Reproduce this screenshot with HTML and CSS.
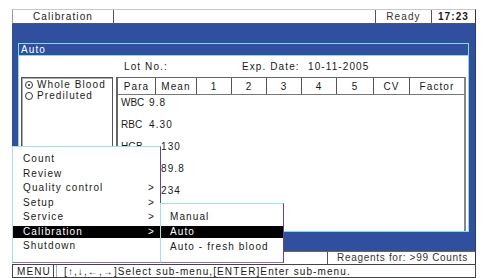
FILE: index.html
```html
<!DOCTYPE html>
<html lang="en">
<head>
    <meta charset="UTF-8">
    <title>Calibration</title>
    <link rel="stylesheet" href="styles.css">
</head>
<body>
    <div class="screen">
        <div class="topbar">
            <div class="cell cell-title">Calibration</div>
            <div class="cell cell-fill"></div>
            <div class="cell cell-ready">Ready</div>
            <div class="cell cell-clock">17:23</div>
        </div>

        <div class="desk">
            <div class="dialog">
                <div class="dialog-title">Auto</div>
                <div class="dialog-body">
                    <div class="lot-row">
                        <span class="lot">Lot No.:</span>
                        <span class="exp">Exp. Date:</span>
                        <span class="date">10-11-2005</span>
                    </div>
                    <div class="panels">
                        <div class="mode-box">
                            <div class="radio on"><span class="dot"></span>Whole Blood</div>
                            <div class="radio"><span class="dot"></span>Prediluted</div>
                        </div>
                        <div class="cal-table">
                            <div class="head">
                                <div class="c c-para">Para</div>
                                <div class="c c-mean">Mean</div>
                                <div class="c c-n">1</div>
                                <div class="c c-n">2</div>
                                <div class="c c-n">3</div>
                                <div class="c c-n">4</div>
                                <div class="c c-5">5</div>
                                <div class="c c-cv">CV</div>
                                <div class="c c-factor">Factor</div>
                            </div>
                            <div class="rows">
                                <div class="row"><span class="para">WBC</span><span class="val">9.8</span></div>
                                <div class="row"><span class="para">RBC</span><span class="val">4.30</span></div>
                                <div class="row"><span class="para">HGB</span><span class="val shift">130</span></div>
                                <div class="row"><span class="para">MCV</span><span class="val shift">89.8</span></div>
                                <div class="row"><span class="para">PLT</span><span class="val shift">234</span></div>
                            </div>
                        </div>
                    </div>
                </div>
            </div>
        </div>

        <div class="status">
            <div class="status-fill"></div>
            <div class="reagents">Reagents for: &gt;99 Counts</div>
        </div>
        <div class="hint">
            <div class="hint-key">MENU</div>
            <div class="hint-text">[↑,↓,←,→]Select sub-menu,[ENTER]Enter sub-menu.</div>
        </div>

        <!-- popup menus -->
        <div class="menu">
            <div class="item">Count</div>
            <div class="item">Review</div>
            <div class="item">Quality control<span class="more">&gt;</span></div>
            <div class="item">Setup<span class="more">&gt;</span></div>
            <div class="item">Service<span class="more">&gt;</span></div>
            <div class="item active">Calibration<span class="more">&gt;</span></div>
            <div class="item">Shutdown</div>
        </div>
        <div class="submenu">
            <div class="item">Manual</div>
            <div class="item active">Auto</div>
            <div class="item">Auto - fresh blood</div>
        </div>
    </div>
</body>
</html>
```

FILE: styles.css
```css
body {
    margin: 0;
    background: #ffffff;
    font-family: "Liberation Sans", Arial, sans-serif;
    font-size: 10px;
    letter-spacing: 1.1px;
    color: #1a1a1a;
}
.screen {
    position: relative;
    width: 464px;
    margin: 9px 0 0 12px;
}
.topbar {
    display: flex;
    height: 15px;
    border-top: 1px solid #c8c8c8;
    border-bottom: 1px solid #555;
    border-right: 1px solid #333;
    border-left: 1px solid #999;
    box-sizing: border-box;
}
.cell {
    display: flex;
    align-items: center;
    justify-content: center;
    border-right: 1px solid #555;
}
.cell-title {
    width: 100px;
}
.cell-fill {
    flex: 1;
}
.cell-ready {
    width: 55px;
    color: #333;
}
.cell-clock {
    width: 43px;
    border-right: none;
    font-weight: bold;
}
.desk {
    height: 227px;
    background: #30509f;
    padding: 19px 6px 0 6px;
    box-sizing: border-box;
    border-right: 1px solid #233c80;
}
.dialog {
    width: 451px;
    height: 189px;
    border: 1px solid #86dbea;
    box-sizing: border-box;
    display: flex;
    flex-direction: column;
}
.dialog-title {
    height: 11px;
    line-height: 11px;
    padding-left: 2px;
    color: #ffffff;
    background: #30509f;
    border-bottom: 1px solid #86dbea;
}
.dialog-body {
    flex: 1;
    background: #ffffff;
    padding: 4px 0 0 2px;
}
.lot-row {
    display: flex;
    height: 14px;
    line-height: 14px;
    padding-left: 103px;
}
.lot {
    width: 118px;
}
.exp {
    width: 66px;
}
.panels {
    display: flex;
    margin-top: 3px;
    gap: 3px;
}
.mode-box {
    width: 92px;
    height: 153px;
    border: 1px solid #555;
    box-shadow: inset 1px 1px 0 #aaa;
    box-sizing: border-box;
    padding: 1px 0 0 3px;
}
.radio {
    display: flex;
    align-items: center;
    height: 11px;
    gap: 4px;
}
.dot {
    width: 6px;
    height: 6px;
    border: 1px solid #333;
    border-radius: 50%;
    position: relative;
}
.radio.on .dot::after {
    content: "";
    position: absolute;
    left: 2px;
    top: 2px;
    width: 2px;
    height: 2px;
    background: #222;
    border-radius: 50%;
}
.cal-table {
    width: 350px;
    height: 154px;
    border-left: 2px double #666;
    border-top: 1px solid #666;
    border-right: 2px solid #888;
    box-sizing: border-box;
}
.head {
    display: flex;
    height: 16px;
    border-bottom: 1px solid #777;
}
.c {
    display: flex;
    align-items: center;
    justify-content: center;
    border-right: 1px solid #555;
}
.c-para { width: 37px; }
.c-mean { width: 40px; }
.c-n { width: 34px; }
.c-5 { width: 36px; }
.c-cv { width: 35px; }
.c-factor { flex: 1; border-right: none; }
.rows {
    padding: 2px 0 0 3px;
    display: flex;
    flex-direction: column;
    gap: 10px;
}
.row {
    display: flex;
    height: 12px;
    line-height: 12px;
}
.para {
    width: 28px;
    letter-spacing: 0;
}
.val.shift {
    margin-left: 12px;
}
.status {
    display: flex;
    height: 12px;
    line-height: 12px;
    background: #ffffff;
    border-top: 1px solid #666;
    border-right: 1px solid #333;
}
.status-fill {
    flex: 1;
}
.reagents {
    width: 148px;
    padding-left: 9px;
    box-sizing: border-box;
    border-left: 1px solid #555;
    color: #333;
    letter-spacing: 0.7px;
    white-space: nowrap;
}
.hint {
    display: flex;
    height: 14px;
    line-height: 13px;
    border: 1px solid #444;
    box-sizing: border-box;
    white-space: nowrap;
}
.hint-key {
    width: 41px;
    padding-left: 4px;
    border-right: 1px solid #444;
    box-sizing: border-box;
}
.hint-text {
    padding-left: 7px;
    border-left: 1px solid #aaa;
    margin-left: 2px;
}
.menu, .submenu {
    position: absolute;
    background: #ffffff;
    border-top: 1px solid #9ee3ee;
    border-left: 1px solid #9ee3ee;
    border-right: 1px solid #6b3fa0;
    border-bottom: 1px solid #8a6fae;
    box-sizing: border-box;
    display: flex;
    flex-direction: column;
}
.menu {
    left: 0;
    top: 137px;
    width: 149px;
    height: 117px;
    padding-top: 6px;
    gap: 2.5px;
}
.submenu {
    left: 148px;
    top: 194px;
    width: 124px;
    height: 60px;
    padding-top: 7px;
    gap: 3px;
}
.item {
    display: flex;
    height: 12px;
    line-height: 12px;
    padding-left: 10px;
}
.submenu .item {
    padding-left: 9px;
}
.item.active {
    background: #000000;
    color: #ffffff;
}
.more {
    margin-left: auto;
    width: 12px;
}
```
